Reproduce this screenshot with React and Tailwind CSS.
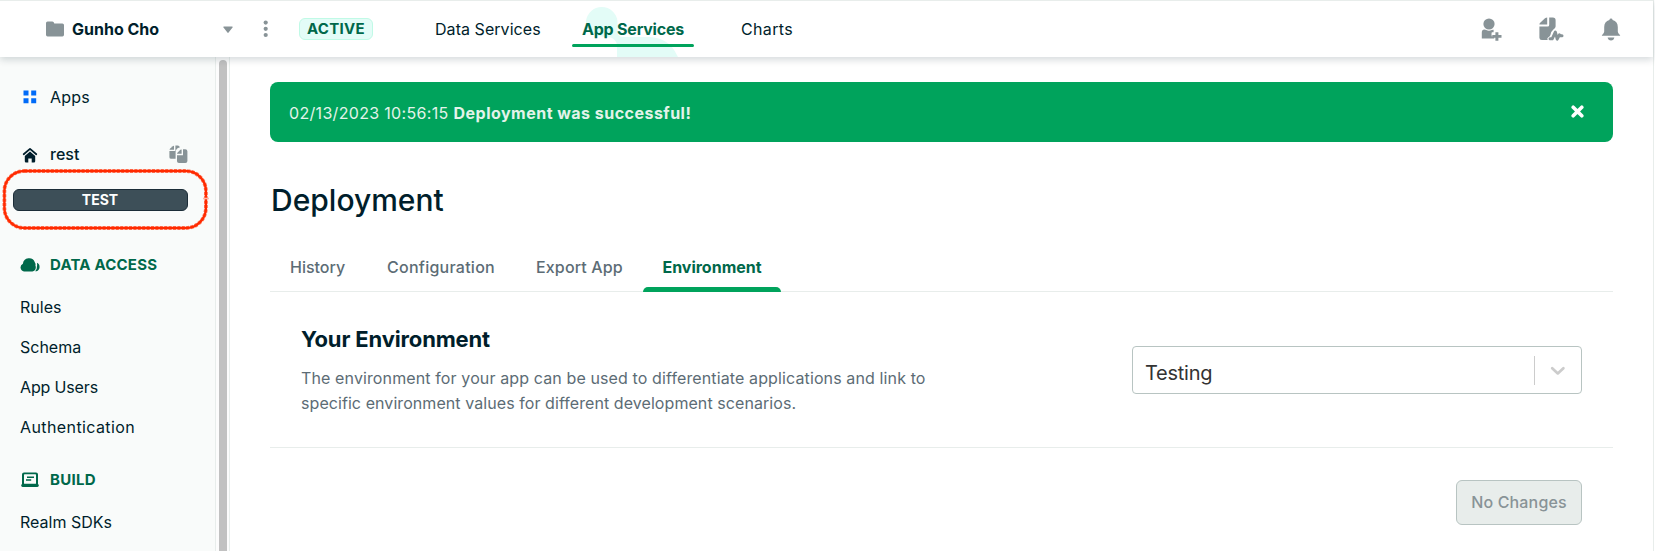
function FolderIcon() {
  return (
    <svg width="18" height="16" viewBox="0 0 18 16" fill="#889397" className="shrink-0">
      <path d="M0 2Q0 .4 1.6 .4H6.2Q7.2 .4 7.7 1.3L8.3 2.4H16.4Q18 2.4 18 4V13.8Q18 15.4 16.4 15.4H1.6Q0 15.4 0 13.8Z" />
    </svg>
  );
}

function InviteIcon() {
  return (
    <svg width="21" height="24" viewBox="0 0 21 24" fill="#889397">
      <circle cx="8" cy="6" r="5.6" />
      <path d="M.8 14.6Q.8 11.6 3.4 11.6Q4.6 11.6 5.2 12.1Q8 13.6 10.8 12.1Q11.6 11.6 12.6 11.7V14.2H10.8Q10 16.2 10.8 18.6H13.2V20.6H.8Z" />
      <path d="M14.4 14.2h3v2.9h3.1v2.6h-3.1v3h-3v-3h-3.1v-2.6h3.1z" />
    </svg>
  );
}

function ActivityIcon() {
  return (
    <svg width="25" height="25" viewBox="0 0 25 25" fill="#889397">
      <path d="M8.2 .4V7.6H.4Q.4 6.6 1.2 5.8L6 1.2Q7 .4 8.2 .4Z" />
      <path d="M10.2 .4H13.8Q16.6 .4 16.6 3.2V9.6Q16.6 11 14.4 12.6Q12 14.4 11.4 18Q11 19.6 9.4 20.2Q7.8 21 8.6 23H2.8Q.4 23 .4 20.8V9.6H8.6Q10.2 9.6 10.2 8Z" />
      <path
        d="M11 21.8H13.2L16.4 15L18.2 22.2L20.4 17.8L21.4 18.8H23"
        fill="none"
        stroke="#889397"
        strokeWidth="3"
        strokeLinecap="round"
        strokeLinejoin="round"
      />
    </svg>
  );
}

function BellIcon() {
  return (
    <svg width="20" height="24" viewBox="0 0 20 24" fill="#889397">
      <path d="M10 .6Q11.4 .6 11.6 2Q16.8 3.6 16.8 9V13.4Q17 15.2 18.2 16.2Q19.2 16.8 19.2 17.8H.8Q.8 16.8 1.8 16.2Q3 15.2 3.2 13.4V9Q3.2 3.6 8.4 2Q8.6 .6 10 .6Z" />
      <path d="M6.6 19.6H13.4Q12.8 22.6 10 22.6Q7.2 22.6 6.6 19.6Z" />
    </svg>
  );
}

function AppsIcon() {
  return (
    <svg width="14" height="14" viewBox="0 0 14 14" fill="#016BF8">
      <path d="M.5 .5h5v5h-5zM8.2 .5h5v5h-5zM.5 8.2h5v5h-5zM8.2 8.2h5v5h-5z" />
    </svg>
  );
}

function HomeIcon() {
  return (
    <svg width="16" height="16" viewBox="0 0 16 16" fill="#001E2B">
      <path
        d="M1.7 7.2L8 1.9L14.3 7.2"
        fill="none"
        stroke="#001E2B"
        strokeWidth="1.8"
        strokeLinecap="round"
        strokeLinejoin="round"
      />
      <path d="M8 4.6L13.2 9V14.2Q13.2 15.4 12 15.4H9.7V11.4H6.3V15.4H4Q2.8 15.4 2.8 14.2V9Z" />
    </svg>
  );
}

function CopiesIcon() {
  return (
    <svg width="19" height="19" viewBox="0 0 19 19" fill="#889397">
      <path d="M5 .8V4.8H.6Q.6 4.2 1.2 3.6L3.8 1.2Q4.4 .7 5 .8Z" />
      <path d="M6.4 .4H8.6Q10.6 .4 10.8 2.6Q8.6 2.8 7.6 4.2Q6.6 5.4 6.6 7V13.8H2.2Q.4 13.8 .4 12.2V6H6.4Z" />
      <path d="M12.6 4.4V8.8H8Q8 8 8.6 7.4L11.4 4.8Q12 4.3 12.6 4.4Z" />
      <path d="M14 4.2H16.2Q18.4 4.2 18.4 6.2V16Q18.4 18 16.4 18H10Q8 18 8 16.2V10.2H14Z" />
    </svg>
  );
}

function CloudIcon() {
  return (
    <svg width="21" height="14" viewBox="0 0 21 14" fill="#00684A">
      <path d="M4 13.4A4 4 0 0 1 2.9 5.8A6.2 6.2 0 0 1 14.9 4.4Q15.9 6 15.4 7.6Q15.9 8.6 15.8 9.8Q15.5 13 12.4 13.4Z" />
      <path d="M17 4.8A4.6 4.6 0 0 1 16.4 13.3H15.2Q17.2 11.4 16.9 8.8Q17.3 6.8 17 4.8Z" />
    </svg>
  );
}

function LaptopIcon() {
  return (
    <svg width="18" height="16" viewBox="0 0 18 16">
      <path
        d="M1 2.4Q1 .4 3 .4H15Q17 .4 17 2.4V12.6H17.8V13.6Q17.8 15 16.4 15H1.6Q.2 15 .2 13.6V12.6H1Z"
        fill="#00684A"
      />
      <rect x="3" y="2.2" width="12" height="9.6" rx=".6" fill="#F9FBFA" />
      <path d="M6 5.2H13M5 8H10.2" stroke="#00684A" strokeWidth="1.4" />
    </svg>
  );
}

function SideLink({ children }) {
  return <a className="block h-10 pl-5 leading-6">{children}</a>;
}

function Header() {
  return (
    <header className="relative z-10 flex h-[57px] w-[1653px] items-center border-t border-[#e8edeb] bg-white shadow-[0_3px_7px_0_rgba(0,30,43,0.16)]">
      <div className="flex w-[233px] items-center pl-[46px]">
        <FolderIcon />
        <span className="ml-2 grow font-bold">Gunho Cho</span>
        <svg width="10" height="8" viewBox="0 0 10 8" className="mt-0.5">
          <path d="M.8 .6H9.2Q10.2 .6 9.5 1.5L5.6 6.6Q5 7.4 4.4 6.6L.5 1.5Q-.2 .6 .8 .6Z" fill="#889397" />
        </svg>
      </div>
      <svg width="6" height="18" viewBox="0 0 6 18" fill="#889397" className="ml-[30px]">
        <circle cx="2.7" cy="2.6" r="2.1" />
        <circle cx="2.7" cy="8.8" r="2.1" />
        <circle cx="2.7" cy="15" r="2.1" />
      </svg>
      <span className="ml-[30px] flex h-[22px] w-[74px] items-center justify-center rounded-[6px] border border-[#c0fae6] bg-[#e3fcf7] text-[15px] font-bold tracking-[0.3px] text-[#00684A]">
        ACTIVE
      </span>
      <nav className="flex h-full items-center">
        <a className="ml-[62px] w-[137px] tracking-[0.05px]">Data Services</a>
        <a className="relative flex h-full w-[122px] items-center justify-center font-bold tracking-[-0.2px] text-[#00684A]">
          <svg width="122" height="56" viewBox="0 0 122 56" className="absolute left-0 top-0">
            <path
              d="M14 20.5A15.8 15.8 0 0 1 45.5 20.5V30Q45.5 36 51 36H74C92 36 100 43 106 56H45V45Q45 39 39 36.5C24 36 14 31 14 20.5Z"
              fill="#E3FCF7"
            />
            <rect x="0" y="43" width="122" height="3" rx="1.5" fill="#00A35C" />
          </svg>
          <span className="relative">App Services</span>
        </a>
        <a className="ml-[47px] tracking-[0.35px]">Charts</a>
      </nav>
      <div className="ml-auto flex items-center pr-[32px] pt-px">
        <InviteIcon />
        <div className="ml-[37px]">
          <ActivityIcon />
        </div>
        <div className="ml-[37px]">
          <BellIcon />
        </div>
      </div>
    </header>
  );
}

function Sidebar() {
  return (
    <aside className="relative h-full w-[216px] shrink-0 border-r border-[#e8edeb] bg-[#F9FBFA] pt-7">
      <div className="flex h-6 items-center pl-[23px]">
        <AppsIcon />
        <span className="ml-[13px] tracking-[0.2px]">Apps</span>
      </div>
      <div className="mt-[33px] flex h-6 items-center pl-[22px] pt-px font-medium text-[#001E2B]">
        <HomeIcon />
        <span className="-mt-px ml-3 grow">rest</span>
        <div className="mr-[27px]">
          <CopiesIcon />
        </div>
      </div>
      <div className="ml-[13px] mt-[23px] flex h-[22px] w-[175px] items-center justify-center rounded-[6px] border border-[#1C2D38] bg-[#3D4F58] pr-px text-[14px] font-bold text-white">
        TEST
      </div>
      <div className="mt-[42px] flex h-6 items-center pl-5 text-[15px] font-bold tracking-[0.2px] text-[#00684A]">
        <CloudIcon />
        <span className="ml-[9px]">DATA ACCESS</span>
      </div>
      <nav className="mt-[18px]">
        <SideLink>Rules</SideLink>
        <SideLink>Schema</SideLink>
        <SideLink>
          <span className="tracking-[-0.15px]">App Users</span>
        </SideLink>
        <SideLink>
          <span className="tracking-[0.4px]">Authentication</span>
        </SideLink>
      </nav>
      <div className="mt-[13px] flex h-6 items-center pl-[21px] text-[15px] font-bold tracking-[0.3px] text-[#00684A]">
        <LaptopIcon />
        <span className="ml-[11px]">BUILD</span>
      </div>
      <nav className="mt-[18px]">
        <SideLink>Realm SDKs</SideLink>
      </nav>
      <svg width="212" height="66" viewBox="0 0 212 66" className="absolute left-0 top-[109px]" fill="none">
        <rect x="4.4" y="5" width="201.5" height="57" rx="20" stroke="#FF7A5C" strokeWidth="3.8" strokeDasharray="3 1.4" />
        <rect x="4.4" y="5" width="201.5" height="57" rx="20" stroke="#FF2A00" strokeWidth="2.4" />
        <path d="M203 32.5H209" stroke="#FFB5A5" strokeWidth="1.6" />
      </svg>
    </aside>
  );
}

function Main() {
  return (
    <main className="grow pl-10 pr-10 pt-[25px]">
      <div className="flex h-[60px] items-center rounded-[8px] bg-[#00A35C] pl-[19px] pr-[29px] pt-px text-[#E3F3EA]">
        <span className="tracking-[0.32px]">02/13/2023 10:56:15</span>
        <span className="ml-[5px] grow font-bold tracking-[0.48px]">Deployment was successful!</span>
        <svg width="13" height="13" viewBox="0 0 13 13" className="mb-0.5">
          <path d="M2.2 2.2L10.8 10.8M10.8 2.2L2.2 10.8" stroke="#fff" strokeWidth="3.6" strokeLinecap="round" />
        </svg>
      </div>
      <h1 className="ml-px mt-10 text-[30px] font-medium leading-9 text-[#001E2B]">Deployment</h1>
      <div className="mt-[37px] flex h-[37px] border-b border-[#e8edeb] font-medium text-[#5C6C75]">
        <a className="ml-5 w-[97px]">History</a>
        <a className="w-[149px] tracking-[0.25px]">Configuration</a>
        <a className="w-[107px] tracking-[0.15px]">Export App</a>
        <a className="flex h-[37px] w-[138px] flex-col items-center justify-between font-bold text-[#00684A]">
          Environment
          <span className="block h-[5px] w-full rounded-t-[5px] bg-[#00A35C]" />
        </a>
      </div>
      <section className="flex h-[156px] items-start border-b border-[#e8edeb] pl-[31px] pr-[31px]">
        <div className="grow pt-[31px]">
          <h2 className="text-[22px] font-bold leading-8 tracking-[-0.15px] text-[#001E2B]">Your Environment</h2>
          <p className="mt-[11px] whitespace-nowrap leading-[25px] text-[#5C6C75]">
            <span className="tracking-[0.12px]">
              The environment for your app can be used to differentiate applications and link to
            </span>
            <br />
            <span className="tracking-[0.07px]">specific environment values for different development scenarios.</span>
          </p>
        </div>
        <div className="mt-[54px] flex h-12 w-[450px] items-center rounded-[4px] border border-[#b8c4c2] pl-3">
          <span className="grow pt-[5px] text-[20px] tracking-[-0.25px] text-[#333]">Testing</span>
          <span className="h-[29px] w-px bg-[#ccc]" />
          <svg width="46" height="16" viewBox="0 0 46 16" fill="none">
            <path
              d="M17.2 6.2L22.8 11.4L28.4 6.2"
              stroke="#ccc"
              strokeWidth="2.7"
              strokeLinecap="round"
              strokeLinejoin="round"
            />
          </svg>
        </div>
      </section>
      <div className="flex justify-end pr-[31px] pt-8">
        <button className="h-[45px] w-[126px] rounded-[6px] border border-[#b8c4c2] bg-[#E8EDEB] pb-0.5 font-medium tracking-[0.15px] text-[#889397]">
          No Changes
        </button>
      </div>
    </main>
  );
}

export default function App() {
  return (
    <div className="h-[551px] w-[1655px] overflow-hidden bg-white font-['Inter',sans-serif] text-[16px] leading-6 text-[#001E2B]">
      <div className="h-full w-[1654px] border-r border-[#e8edeb]">
        <Header />
        <div className="flex h-[494px] overflow-hidden">
          <Sidebar />
          <div className="flex w-3.5 shrink-0 border-r border-[#e8edeb] bg-[#fcfcfc] pl-[3px] pt-[3px]">
            <div className="h-full w-2 rounded-t-[4px] bg-[#c1c1c1]" />
          </div>
          <Main />
        </div>
      </div>
    </div>
  );
}
